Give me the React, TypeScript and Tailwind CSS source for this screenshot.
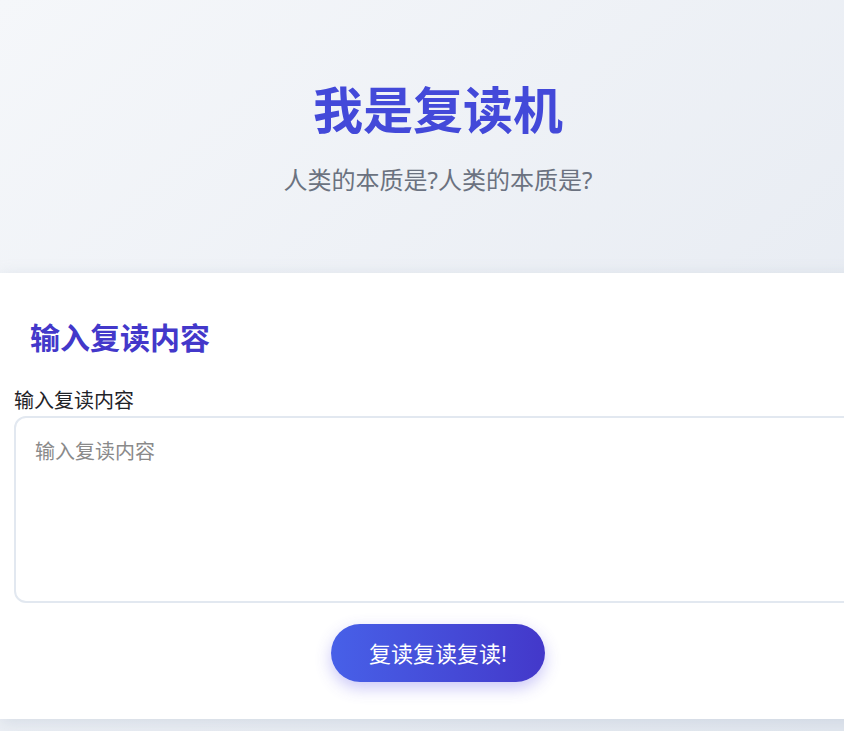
import { useState } from "react";

export default function App() {
  const [text, setText] = useState("");

  return (
    <div
      className="min-h-screen w-full overflow-hidden bg-gradient-to-br from-[#f5f7fa] to-[#e3e8f0]"
      style={{ fontFamily: '"Noto Sans", "Noto Sans CJK SC", sans-serif' }}
    >
      <div className="w-[876px]">
        <header className="pt-[81px] pb-[77px] text-center">
          <h1 className="text-[50px] leading-[58px] font-bold text-[#4349d9]">
            我是复读机
          </h1>
          <p className="mt-[25px] text-[24px] leading-[32px] text-[#6b7280]">
            人类的本质是?人类的本质是?
          </p>
        </header>

        <section className="bg-white px-[14px] pt-[47px] pb-[37px] shadow-[0_4px_16px_rgba(148,163,184,0.25)]">
          <h2 className="px-4 text-[30px] leading-[36px] font-bold text-[#4338ca]">
            输入复读内容
          </h2>
          <label
            htmlFor="repeat"
            className="mt-[32px] block text-[20px] leading-[26px] text-[#1f2328]"
          >
            输入复读内容
          </label>
          <textarea
            id="repeat"
            value={text}
            onChange={(e) => setText(e.target.value)}
            placeholder="输入复读内容"
            className="mt-[2px] block h-[187px] w-full resize-y rounded-xl border-2 border-[#e2e8f0] px-[19px] py-[20px] text-[20px] leading-[28px] text-gray-800 outline-none placeholder:text-[#8a8a8a]"
          />
          <div className="mt-[21px] flex justify-center">
            <button className="h-[58px] w-[214px] rounded-full bg-gradient-to-r from-[#4760e8] to-[#4338ca] text-[22px] text-white shadow-[0_6px_16px_rgba(79,70,229,0.3)]">
              复读复读复读!
            </button>
          </div>
        </section>
      </div>
    </div>
  );
}
